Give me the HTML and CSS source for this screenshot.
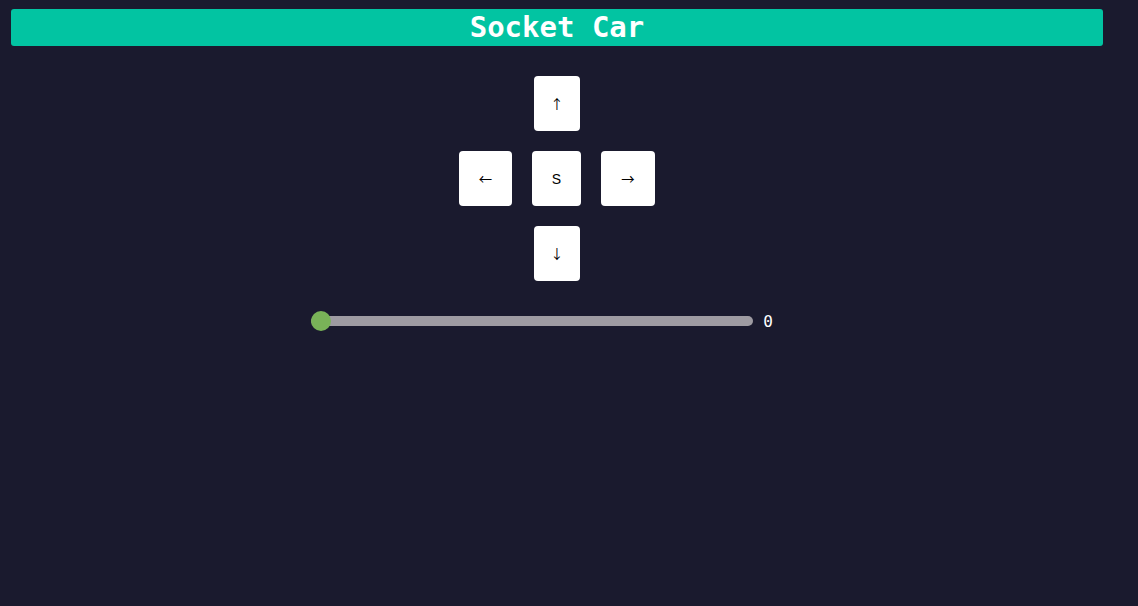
FILE: index.html
```html
<!DOCTYPE html>
<html>
<head>
<meta charset="utf-8">
<title>Socket Car</title>
<link rel="stylesheet" href="styles.css">
</head>
<body>
<div class="page">
  <header class="header">Socket Car</header>
  <main class="controls">
    <div class="row">
      <button class="key key-v">↑</button>
    </div>
    <div class="row">
      <button class="key key-h">←</button>
      <button class="key key-s">S</button>
      <button class="key key-h key-right">→</button>
    </div>
    <div class="row">
      <button class="key key-v">↓</button>
    </div>
    <div class="speed">
      <input class="slider" type="range" min="0" max="255" value="0">
      <span class="speed-value">0</span>
    </div>
  </main>
</div>
</body>
</html>
```

FILE: styles.css
```css
html, body {
  margin: 0;
  padding: 0;
  background: #1a1a2e;
  height: 100%;
}

.page {
  width: 1092px;
  padding: 9px 0 0 11px;
}

.header {
  height: 37px;
  line-height: 37px;
  background: #02c4a2;
  border-radius: 3px;
  color: #ffffff;
  text-align: center;
  font-family: "DejaVu Sans Mono", monospace;
  font-weight: bold;
  font-size: 29px;
}

.controls {
  display: flex;
  flex-direction: column;
  align-items: center;
  gap: 20px;
  padding-top: 30px;
}

.row {
  display: flex;
  gap: 20px;
  justify-content: center;
}

.key {
  height: 55px;
  padding: 0;
  border: none;
  border-radius: 4px;
  background: #ffffff;
  color: #000000;
  font-family: "Noto Sans CJK SC", sans-serif;
  font-size: 13.33px;
  cursor: pointer;
}

.key-v { width: 46px; }
.key-h { width: 53px; }
.key-right { width: 54px; }
.key-s {
  width: 49px;
  font-family: "Liberation Sans", sans-serif;
  font-size: 14px;
}

.speed {
  display: flex;
  align-items: center;
  gap: 10px;
  margin-top: 10px;
  padding-right: 30px;
  height: 20px;
}

.slider {
  -webkit-appearance: none;
  appearance: none;
  width: 442px;
  height: 10px;
  margin: 0;
  border-radius: 5px;
  background: #9e9ba2;
  outline: none;
}

.slider::-webkit-slider-thumb {
  -webkit-appearance: none;
  appearance: none;
  width: 20px;
  height: 20px;
  border-radius: 50%;
  background: #79b358;
  border: none;
}

.speed-value {
  color: #ffffff;
  font-family: "DejaVu Sans Mono", monospace;
  font-size: 16px;
}
```
